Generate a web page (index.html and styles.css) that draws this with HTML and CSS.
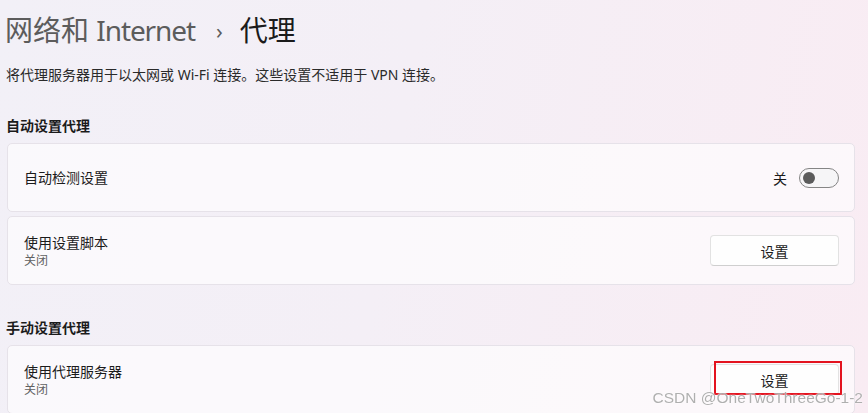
FILE: index.html
```html
<!DOCTYPE html>
<html>
<head>
  <title>代理</title>
  <meta charset="utf-8">
  <link rel="stylesheet" href="styles.css">
</head>
<body>
  <div class="page">
    <h1 class="crumbs">
      <span class="crumb">网络和 <span class="latin">Internet</span></span>
      <span class="sep">›</span>
      <span class="current">代理</span>
    </h1>
    <p class="desc">将代理服务器用于以太网或 Wi-Fi 连接。这些设置不适用于 VPN 连接。</p>

    <h2 class="group-title">自动设置代理</h2>
    <div class="card">
      <div class="card-text">
        <div class="card-title">自动检测设置</div>
      </div>
      <div class="switch-wrap">
        <span class="switch-label">关</span>
        <span class="switch"><span class="knob"></span></span>
      </div>
    </div>
    <div class="card">
      <div class="card-text">
        <div class="card-title">使用设置脚本</div>
        <div class="card-sub">关闭</div>
      </div>
      <span class="btn">设置</span>
    </div>

    <h2 class="group-title group-gap">手动设置代理</h2>
    <div class="card">
      <div class="card-text">
        <div class="card-title">使用代理服务器</div>
        <div class="card-sub">关闭</div>
      </div>
      <span class="btn marked">设置</span>
    </div>
  </div>
  <div class="watermark">CSDN @OneTwoThreeGo-1-2</div>
</body>
</html>
```

FILE: styles.css
```css
body {
  margin: 0;
  height: 413px;
  overflow: hidden;
  background: linear-gradient(100deg, #f2f0f7 0%, #f4eff6 45%, #f9ecf3 100%);
  font-family: "Noto Sans", "Noto Sans CJK SC", sans-serif;
  color: #1b1b1b;
}
.page {
  padding: 12px 13px 0 5px;
}
.crumbs {
  margin: 0;
  font-size: 28px;
  line-height: 36px;
  font-weight: 400;
  display: flex;
  align-items: center;
}
.crumb {
  color: #5c5c5c;
}
.latin {
  letter-spacing: -1.1px;
}
.sep {
  color: #5c5c5c;
  font-size: 22px;
  margin: 0 17px 0 21px;
}
.current {
  color: #1b1b1b;
}
.desc {
  margin: 17px 0 0 1px;
  font-size: 14px;
  line-height: 20px;
  color: #2a2a2a;
}
.group-title {
  margin: 31px 0 7px 1px;
  font-size: 14px;
  line-height: 20px;
  font-weight: 600;
}
.group-gap {
  margin-top: 33px;
}
.card {
  box-sizing: border-box;
  height: 69px;
  margin: 0 0 4px 2px;
  padding: 0 15px 0 16px;
  border: 1px solid #e6e2e9;
  border-radius: 5px;
  background: rgba(255, 255, 255, 0.62);
  display: flex;
  align-items: center;
  justify-content: space-between;
}
.card-title {
  font-size: 14px;
  line-height: 19px;
}
.card-sub {
  margin-top: 1px;
  font-size: 12px;
  line-height: 16px;
  color: #616161;
}
.switch-wrap {
  display: flex;
  align-items: center;
  gap: 12px;
  font-size: 14px;
}
.switch {
  width: 40px;
  height: 20px;
  box-sizing: border-box;
  border: 1px solid #858585;
  border-radius: 10px;
  background: #f6f5f7;
  display: flex;
  align-items: center;
  padding-left: 3px;
}
.knob {
  width: 12px;
  height: 12px;
  border-radius: 50%;
  background: #5b5b5b;
}
.btn {
  position: relative;
  width: 129px;
  height: 31px;
  box-sizing: border-box;
  border: 1px solid #e2e2e2;
  border-bottom-color: #cfcfcf;
  border-radius: 4px;
  background: #fefefe;
  font-size: 14px;
  display: flex;
  align-items: center;
  justify-content: center;
}
/* red highlight box drawn over the proxy button */
.marked::after {
  content: "";
  position: absolute;
  left: 3px;
  top: -4px;
  width: 128px;
  height: 34px;
  border: 2px solid #e3131f;
  box-sizing: border-box;
}
.watermark {
  position: fixed;
  right: 5px;
  bottom: 6px;
  font-family: "Liberation Sans", Arial, sans-serif;
  font-size: 15.5px;
  color: rgba(110, 110, 110, 0.55);
  text-shadow: 0 0 2px #fff, 0 0 1px #fff;
}
```
